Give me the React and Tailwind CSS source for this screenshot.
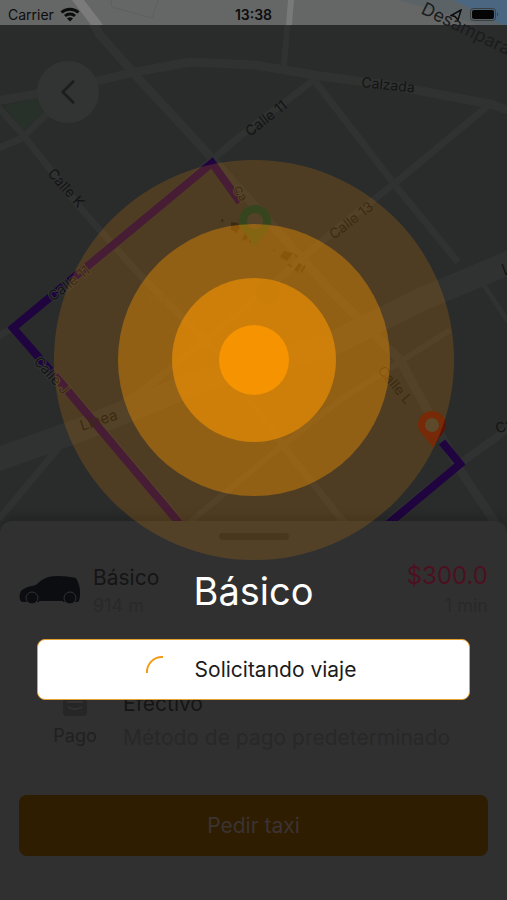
import { ChevronLeft } from "lucide-react";

const roads = [
  { d: "M74 -10 L100 35 L138 78 L212 158 L330 290 L400 360 L460 470 L507 540", w: 9 },
  { d: "M-10 102 L60 90 L130 73 L190 62 L255 65 L320 76 L395 86 L490 104 L520 114", w: 9 },
  { d: "M-10 152 L22 138 L70 92", w: 7 },
  { d: "M-10 98 L24 136 L82 210 L140 275 L215 350 L280 442 L350 530", w: 7 },
  { d: "M290 -10 L284 66", w: 6 },
  { d: "M314 80 L362 142 L394 184 L458 262", w: 7 },
  { d: "M314 80 L240 136 L212 160 L88 268 L12 328 L-10 342", w: 7 },
  { d: "M490 104 L394 184 L340 226 L240 312 L150 385 L60 446 L-10 530", w: 7 },
  { d: "M-10 462 L80 430 L190 385 L330 345 L420 300 L520 258", w: 24 },
  { d: "M12 328 L62 382 L180 522", w: 8 },
  { d: "M520 420 L462 462 L388 522", w: 8 },
  { d: "M190 522 L262 462 L340 400 L450 330", w: 6 },
  { d: "M484 285 L520 340", w: 5 },
];

function RoadMap() {
  return (
    <svg
      className="absolute inset-0 w-full h-full"
      viewBox="0 0 507 521"
      preserveAspectRatio="xMidYMid slice"
      fontFamily="Inter, sans-serif"
      aria-hidden="true"
    >
      <rect width="507" height="521" fill="#2a2b2b" />
      <path d="M4 106 L36 98 L46 120 L22 130 Z" fill="#28302a" />
      <g fill="none" stroke="#303131" strokeLinejoin="round">
        {roads.map((road) => (
          <path key={road.d} d={road.d} strokeWidth={road.w} />
        ))}
      </g>

      {/* strip of map under the status bar */}
      <rect width="507" height="25" fill="#656767" />
      <path d="M398 0 L507 0 L507 25 L478 25 L440 12 Z" fill="#5b6366" />
      <path d="M454 0 H507 V25 H504 C488 20 470 8 454 0Z" fill="#4b6680" />
      <path d="M72 0 H84 L103 25 H91 Z" fill="#7b7b7b" />
      <path d="M288 0 H294 L292 25 H286 Z" fill="#787a7a" />
      <path d="M111 0 L112 7 L152 18 L158 0" fill="none" stroke="#5e6060" />

      <g fill="none" stroke="#200440" strokeWidth="8">
        <path d="M240 202 L212 163 L13 328 L62 384 L180 524" />
        <path d="M442 442 L460 464 L388 524" />
      </g>

      <g fill="#131414" fontSize="14">
        <text transform="translate(250 137) rotate(-38)">Calle 11</text>
        <text transform="translate(361 87) rotate(6)">Calzada</text>
        <text transform="translate(47 174) rotate(48)">Calle K</text>
        <text transform="translate(334 240) rotate(-38)">Calle 13</text>
        <g stroke="#343535" strokeWidth="2" paintOrder="stroke">
          <text transform="translate(53 302) rotate(-38)">Calle 11</text>
          <text transform="translate(33 362) rotate(48)">Calle J</text>
          <text transform="translate(232 190) rotate(52)" fontSize="12">Ca</text>
        </g>
        <text transform="translate(82 431) rotate(-18)" fontSize="15">Línea</text>
        <text transform="translate(377 371) rotate(50)">Calle L</text>
        <text transform="translate(498 434) rotate(-24)">Ca</text>
        <text x="501" y="275" fontSize="15">V</text>
        <text x="136" y="303" fill="#24302a">Parque</text>
        <text transform="translate(420 13) rotate(26)" fontSize="18" fill="#1b1c1d">
          Desamparados
        </text>
      </g>

      {/* nearby cars */}
      <g fill="#151515">
        <path d="M231 222 l7 1 -3 6 3 4 -7 -3 Z M238 223 l2 5 -4 5 -3 -4 Z" />
        <path d="M246 231 l4 2 -4 8 -4 -2 Z M252 234 l3 1 -4 8 -2 -1 Z" />
        <path d="M284 251 l9 2 -6 8 -7 -4 Z" />
        <path d="M294 253 l4 3 -2 2 Z M287 264 l5 1 -1 3 Z" />
        <path d="M299 263 l3 2 -4 7 -4 -2 Z M304 265 l2 1 -4 7 -2 -1 Z" />
        <path d="M221 219 l3 1 -2 3 Z M273 249 l2 1 -1 2 Z" />
      </g>
      <circle cx="268" cy="292" r="12" fill="#24302a" />

      <circle cx="255" cy="221" r="9" fill="#303131" />
      <path
        d="M255 205 a16 16 0 0 1 16 16 c0 8 -8 14 -16 26 c-8 -12 -16 -18 -16 -26 a16 16 0 0 1 16 -16Z M255 213 a8 8 0 1 0 0 16 a8 8 0 1 0 0 -16Z"
        fill="#0d3524"
        fillRule="evenodd"
      />
      <circle cx="432" cy="425" r="8" fill="#3a3a34" />
      <path
        d="M432 411 a14 14 0 0 1 14 14 c0 7 -7 11 -13 23 c-6 -11 -15 -15 -15 -23 a14 14 0 0 1 14 -14Z M432 418 a7 7 0 1 0 0 14 a7 7 0 1 0 0 -14Z"
        fill="#5a1408"
        fillRule="evenodd"
      />
    </svg>
  );
}

function StatusBar() {
  return (
    <header className="relative grid grid-cols-3 items-center h-[25px] px-2 pt-1 text-sm text-[#0c0c0c]">
      <div className="flex items-center gap-1.5">
        <span>Carrier</span>
        <svg width="20" height="15" viewBox="0 0 20 15" fill="none" stroke="currentColor" strokeWidth="3">
          <path d="M1.5 5.5 a12.5 12.5 0 0 1 17 0" />
          <path d="M5 9 a7.5 7.5 0 0 1 10 0" />
          <path d="M10 14.5 L7 11.5 a4.5 4.5 0 0 1 6 0 Z" fill="currentColor" stroke="none" />
        </svg>
      </div>
      <span className="text-center font-semibold">13:38</span>
      <div className="flex items-center justify-end gap-2">
        <svg width="12" height="12" viewBox="0 0 12 12" fill="none" stroke="currentColor" strokeWidth="1.5">
          <path d="M11 1 L1 6.5 L5 7.5 L8 11 Z" />
        </svg>
        <svg width="29" height="13" viewBox="0 0 29 13">
          <rect x="0.5" y="0.5" width="25" height="12" rx="3" fill="none" stroke="#3c3d3d" />
          <rect x="2" y="2" width="22" height="9" rx="2" fill="#050505" />
          <path d="M27 4.5 q2 2 0 4Z" fill="#3c3d3d" />
        </svg>
      </div>
    </header>
  );
}

function CarIcon() {
  return (
    <svg width="62" height="30" viewBox="0 0 62 30" aria-hidden="true">
      <path
        d="M1 25 C0 20 1 15 5 14 C9 11 14 11 17 10 C23 4 29 1 38 1 C46 1 53 2 57 3 C59 7 61 11 61 16 C61 21 61 25 59 27 L3 27 Z"
        fill="#0b0d10"
      />
      <path d="M20 26 H44 V30 H20 Z" fill="#303030" />
      <g fill="#0b0d10" stroke="#303234" strokeWidth="1">
        <circle cx="13" cy="23" r="6" />
        <circle cx="51" cy="23" r="6" />
      </g>
    </svg>
  );
}

function RideSheet() {
  return (
    <section className="relative flex flex-col px-[19px] pt-3 pb-11 rounded-t-xl bg-[#303030] shadow-[0_-6px_8px_rgba(0,0,0,0.15)]">
      <div className="self-center w-[70px] h-[7px] rounded-full bg-[#232323]" />

      <div className="flex items-center mt-5 gap-3">
        <CarIcon />
        <div className="flex-1">
          <h2 className="text-[21px] leading-8 text-[#151515]">Básico</h2>
          <p className="text-lg leading-6 text-[#292929]">914 m</p>
        </div>
        <div className="text-right">
          <p className="text-2xl leading-8 text-[#4c1020]">$300.0</p>
          <p className="text-lg leading-7 text-[#292929]">1 min</p>
        </div>
      </div>

      <div className="flex mt-16 gap-6">
        <div className="flex flex-col items-center w-20 pl-8">
          <svg className="mt-3" width="26" height="20" viewBox="0 0 26 20" aria-hidden="true">
            <path d="M1 0 H25 V16 Q25 20 21 20 H5 Q1 20 1 16 Z" fill="#262626" />
            <path d="M5 6 H21 M6 11 q7 4 14 0" stroke="#323232" strokeWidth="2" fill="none" />
          </svg>
          <span className="mt-2 text-lg leading-6 text-[#202020]">Pago</span>
        </div>
        <div className="pt-1">
          <p className="text-[21px] leading-8 text-[#151515]">Efectivo</p>
          <p className="text-[21px] leading-9 text-[#282828]">Método de pago predeterminado</p>
        </div>
      </div>

      <button className="h-[61px] mt-[39px] rounded-lg bg-[#2e1d00] text-[21px] text-[#3b3333]">
        Pedir taxi
      </button>
    </section>
  );
}

function SearchingOverlay() {
  return (
    <div
      role="dialog"
      aria-label="Solicitando viaje"
      className="relative col-start-1 row-start-1 flex flex-col items-center pt-40 px-[37px]"
    >
      <div className="grid place-items-center size-[400px] rounded-full bg-[#f59300]/18">
        <div className="grid place-items-center size-[272px] rounded-full bg-[#f59300]/41">
          <div className="grid place-items-center size-[164px] rounded-full bg-[#f59300]/59">
            <div className="size-[70px] rounded-full bg-[#f59300]" />
          </div>
        </div>
      </div>
      <h1 className="mt-1 text-[38px] leading-[54px] text-white">Básico</h1>
      <button className="flex items-center justify-center gap-6 w-full h-[61px] mt-[21px] pr-1.5 rounded-lg border border-[#e5a030] bg-white text-[21px] text-[#1c1c1c]">
        <svg width="26" height="30" viewBox="0 0 26 30" fill="none" aria-hidden="true">
          <path d="M2 18 A15 15 0 0 1 18 2" stroke="#f59a14" strokeWidth="2" />
        </svg>
        Solicitando viaje
      </button>
    </div>
  );
}

export default function App() {
  return (
    <main className="grid min-h-screen bg-[#2a2b2b] font-[Inter,sans-serif]">
      <div className="col-start-1 row-start-1 flex flex-col">
        <div className="relative flex-1">
          <RoadMap />
          <StatusBar />
          <button
            aria-label="Volver"
            className="relative grid place-items-center size-[62px] mt-9 ml-[37px] rounded-full bg-[#323333] text-[#1c1d1d]"
          >
            <ChevronLeft size={42} strokeWidth={1.5} />
          </button>
        </div>
        <RideSheet />
      </div>
      <SearchingOverlay />
    </main>
  );
}
